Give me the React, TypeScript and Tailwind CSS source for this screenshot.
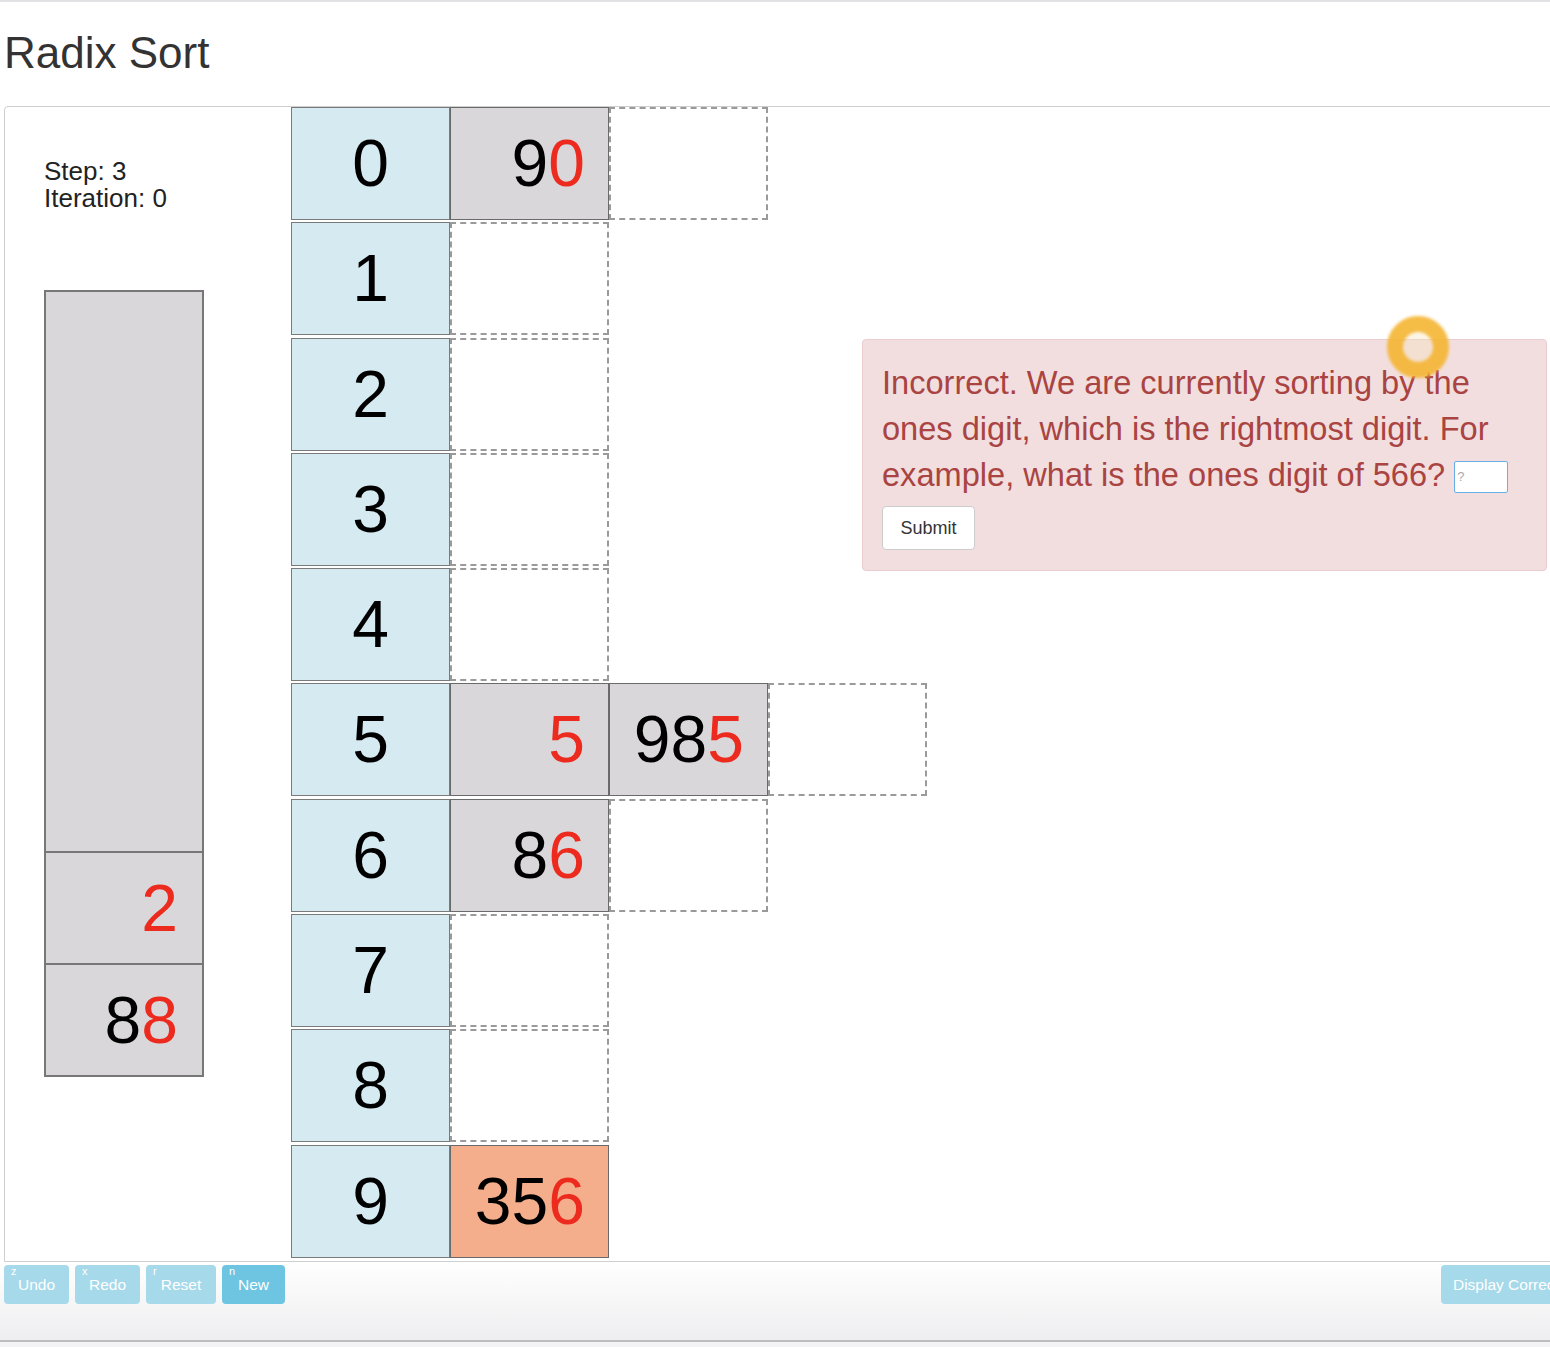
import React from 'react';

type Bucket = {
  digit: number;
  items: { value: string; orange?: boolean }[];
  empty: number;
};

const buckets: Bucket[] = [
  { digit: 0, items: [{ value: '90' }], empty: 1 },
  { digit: 1, items: [], empty: 1 },
  { digit: 2, items: [], empty: 1 },
  { digit: 3, items: [], empty: 1 },
  { digit: 4, items: [], empty: 1 },
  { digit: 5, items: [{ value: '5' }, { value: '985' }], empty: 1 },
  { digit: 6, items: [{ value: '86' }], empty: 1 },
  { digit: 7, items: [], empty: 1 },
  { digit: 8, items: [], empty: 1 },
  { digit: 9, items: [{ value: '356', orange: true }], empty: 0 },
];

const stack = ['2', '88'];

function Num({ value }: { value: string }) {
  // the digit being sorted on (ones) is shown in red
  return (
    <>
      <span className="text-black">{value.slice(0, -1)}</span>
      <span className="text-[#ec2a1e]">{value.slice(-1)}</span>
    </>
  );
}

function ToolButton({
  hotkey,
  label,
  width,
  active,
}: {
  hotkey: string;
  label: string;
  width: string;
  active?: boolean;
}) {
  return (
    <button
      className={`relative h-[39px] rounded-[4px] text-[15.5px] text-white ${width} ${
        active ? 'bg-[#6dc5e1]' : 'bg-[#a6d9ea]'
      }`}
    >
      <span className="absolute left-[7px] top-[1px] text-[11px] leading-[11px]">{hotkey}</span>
      {label}
    </button>
  );
}

export default function App() {
  return (
    <div className="relative w-[1550px] h-[1347px] overflow-hidden bg-white font-['Liberation_Sans',Arial,sans-serif] text-[#333]">
      <div className="h-[2px] bg-[#e2e2e4]" />

      {/* Title */}
      <h1 className="pl-[4px] mt-[27px] text-[44px] leading-[48px] text-[#333]">Radix Sort</h1>

      {/* Main panel */}
      <div className="mt-[29px] ml-[4px] w-[1600px] h-[1156px] border border-[#cfcfcf] rounded-tl-[4px] flex">
        {/* Left: status + input stack */}
        <div className="w-[286px] shrink-0 pl-[39px] pt-[51px]">
          <div className="text-[26px] leading-[27px] text-[#222]">
            <div>Step: 3</div>
            <div>Iteration: 0</div>
          </div>
          <div className="mt-[78px] w-[160px] h-[787px] border-2 border-[#777] bg-[#d9d7da] flex flex-col justify-end">
            {stack.map((v, i) => (
              <div
                key={i}
                className="h-[112px] border-t-2 border-[#777] flex items-center justify-end pr-[24px] text-[66px]"
              >
                <Num value={v} />
              </div>
            ))}
          </div>
        </div>

        {/* Buckets */}
        <div className="w-[571px] shrink-0 flex flex-col gap-[2.3px]">
          {buckets.map((b) => (
            <div key={b.digit} className="flex h-[113px]">
              <div className="w-[159px] shrink-0 bg-[#d6eaf2] border border-[#7a7a7a] flex items-center justify-center text-[66px] text-black">
                {b.digit}
              </div>
              {b.items.map((it, i) => (
                <div
                  key={i}
                  className={`w-[159px] shrink-0 border border-[#6a6a6a] flex items-center justify-end pr-[23px] text-[66px] ${
                    it.orange ? 'bg-[#f5ae8b]' : 'bg-[#d9d7da]'
                  }`}
                >
                  <Num value={it.value} />
                </div>
              ))}
              {Array.from({ length: b.empty }).map((_, i) => (
                <div key={`e${i}`} className="w-[159px] shrink-0 border-2 border-dashed border-[#9a9a9a]" />
              ))}
            </div>
          ))}
        </div>

        {/* Feedback */}
        <div className="shrink-0">
          <div className="mt-[232px] w-[685px] h-[232px] bg-[#f2dede] border border-[#ebccd1] rounded-[4px] px-[19px] pt-[20px] text-[32.6px] leading-[46px] text-[#a94442]">
            <div>
              Incorrect. We are currently sorting by the ones digit, which is the rightmost digit. For example, what
              is the ones digit of 566?{' '}
              <input
                placeholder="?"
                className="inline-block align-middle w-[54px] h-[32px] bg-white border border-[#66afe9] rounded-[2px] px-[2px] text-[13px] text-[#555] placeholder:text-[#aaa] outline-none"
              />
            </div>
            <button className="mt-[8px] h-[44px] w-[93px] bg-white border border-[#ccc] rounded-[4px] text-[18px] leading-[20px] text-[#333]">
              Submit
            </button>
          </div>
        </div>
      </div>

      {/* Footer toolbar */}
      <div className="h-[78px] bg-gradient-to-b from-white to-[#eeeef0] pl-[4px] pt-[3px]">
        <div className="w-[1622px] flex justify-between">
          <div className="flex gap-[6px]">
            <ToolButton hotkey="z" label="Undo" width="w-[65px]" />
            <ToolButton hotkey="x" label="Redo" width="w-[65px]" />
            <ToolButton hotkey="r" label="Reset" width="w-[70px]" />
            <ToolButton hotkey="n" label="New" width="w-[63px]" active />
          </div>
          <button className="h-[39px] w-[185px] rounded-[4px] bg-[#a6d9ea] text-[15.5px] text-white">
            Display Correct Answer
          </button>
        </div>
      </div>
      <div className="h-[2px] bg-[#bdbdbf]" />
      <div className="h-[10px] bg-[#f3f3f5]" />

      {/* Cursor highlight */}
      <div className="absolute left-[1387px] top-[316px] w-[62px] h-[62px] rounded-full border-[16px] border-[#f5b532] bg-[#f7e3b8]/40 blur-[1.5px] opacity-90" />
    </div>
  );
}
